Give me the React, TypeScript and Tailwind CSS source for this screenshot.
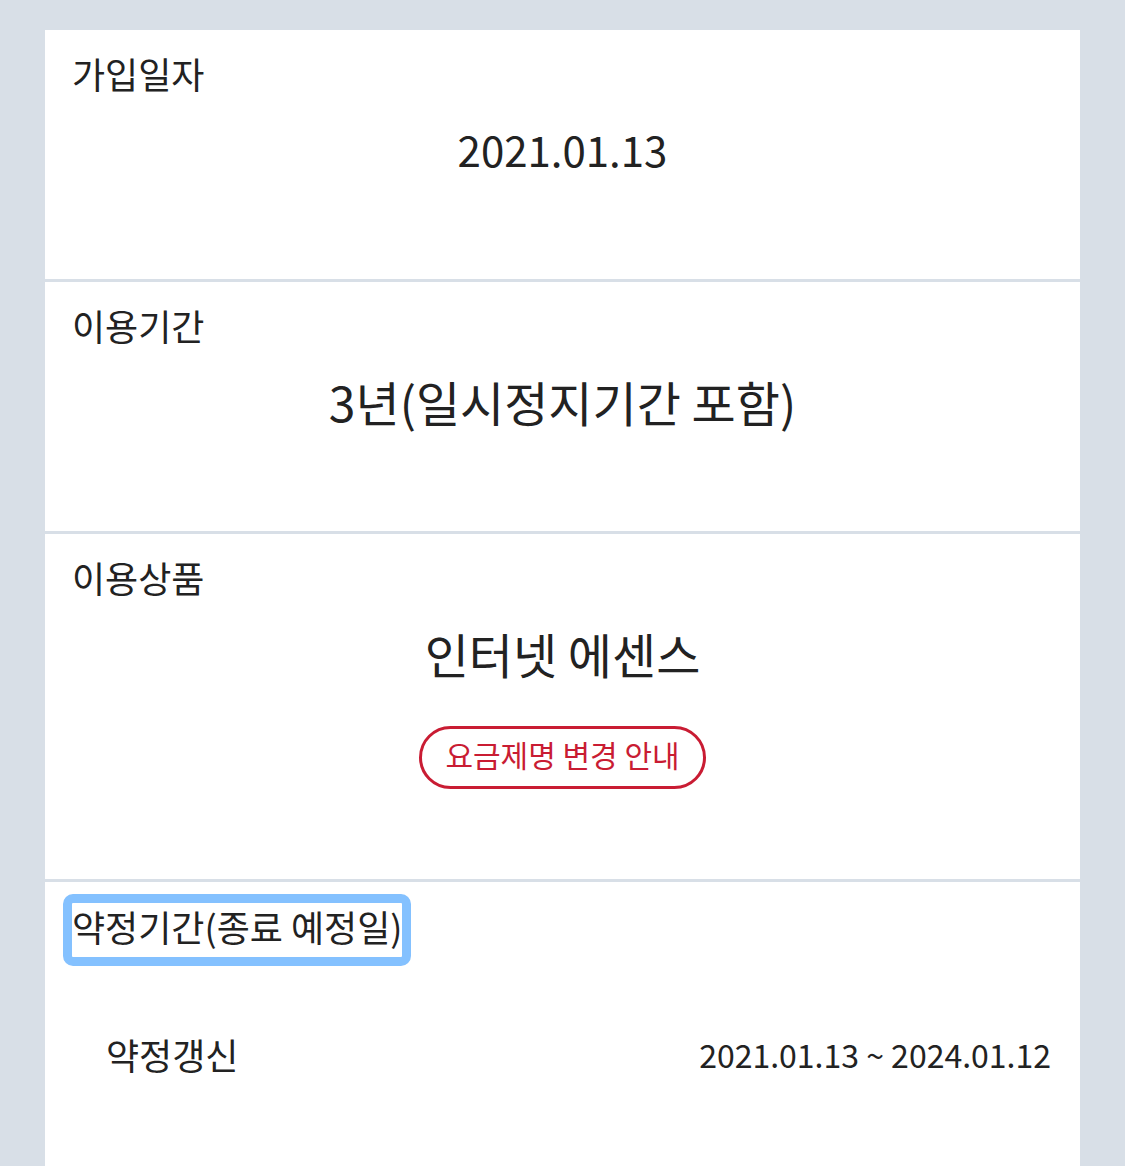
import type { ReactNode } from 'react'

const contracts = [
  { name: '약정갱신', period: '2021.01.13 ~ 2024.01.12' },
]

function Section({ title, children }: { title: string; children: ReactNode }) {
  return (
    <section className="border-b-3 border-[#d8dfe7] px-[27px] pt-5 pb-[90px]">
      <h2 className="pb-2 text-4xl leading-[46px]">{title}</h2>
      <div className="mt-[9px] flex flex-col items-center">{children}</div>
    </section>
  )
}

export default function App() {
  return (
    <div className="flex min-h-screen flex-col bg-[#d8dfe7] px-[45px] pt-[30px] font-['Noto_Sans_CJK_KR',sans-serif] text-[#222]">
      <main className="flex-1 bg-white">
        <Section title="가입일자">
          <p className="pb-1 text-[42px] leading-[72px]">2021.01.13</p>
        </Section>
        <Section title="이용기간">
          <p className="pb-1 text-5xl leading-[72px]">3년(일시정지기간 포함)</p>
        </Section>
        <Section title="이용상품">
          <p className="pb-1 text-5xl leading-[72px]">인터넷 에센스</p>
          <button type="button" className="mt-[33px] rounded-full border-3 border-[#c91c33] px-[23px] pb-[7px] text-3xl leading-[50px] text-[#c91c33]">
            요금제명 변경 안내
          </button>
        </Section>
        <section className="px-[27px] pt-[21px]">
          <h2 className="flex">
            <button type="button" className="rounded-[1px] pb-2 text-4xl leading-[46px] outline-9 outline-[#84c1ff]">
              약정기간(종료 예정일)
            </button>
          </h2>
          {contracts.map(({ name, period }) => (
            <dl key={name} className="mt-[74px] flex justify-between pr-[2px] pl-[34px]">
              <dt className="text-4xl leading-[46px]">{name}</dt>
              <dd className="text-[32px] leading-[46px]">{period}</dd>
            </dl>
          ))}
        </section>
      </main>
    </div>
  )
}
